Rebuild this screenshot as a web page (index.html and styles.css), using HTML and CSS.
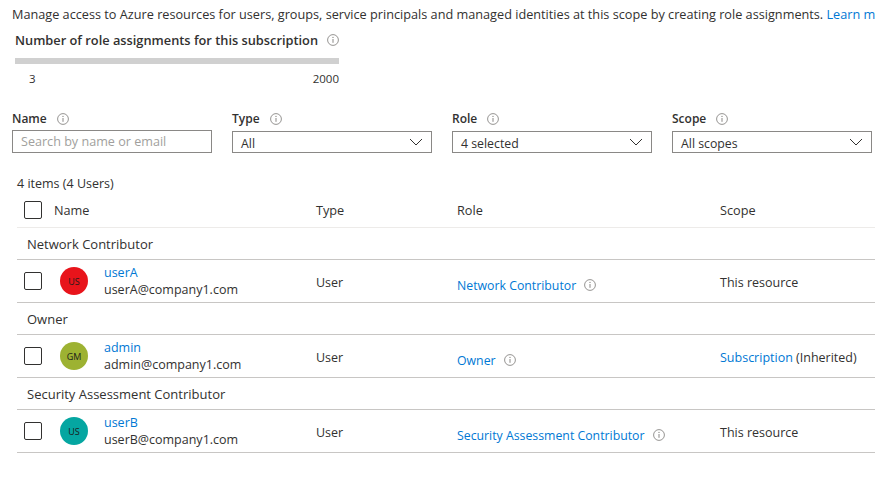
FILE: index.html
```html
<!DOCTYPE html>
<html lang="en">
<head>
<meta charset="utf-8">
<title>Role assignments</title>
<link rel="stylesheet" href="styles.css">
</head>
<body>
<div class="page">
  <p class="desc">Manage access to Azure resources for users, groups, service principals and managed identities at this scope by creating role assignments. <a class="link" href="#">Learn more</a></p>

  <div class="quota">
    <div class="quota-title">Number of role assignments for this subscription
      <svg class="info" width="12" height="12" viewBox="0 0 12 12"><circle cx="6" cy="6" r="5.4" fill="none" stroke="#8a8886" stroke-width="0.9"/><rect x="5.5" y="5" width="1" height="3.8" fill="#8a8886"/><circle cx="6" cy="3.4" r="0.65" fill="#8a8886"/></svg>
    </div>
    <div class="bar"></div>
    <div class="bar-labels"><span>3</span><span>2000</span></div>
  </div>

  <div class="filters">
    <div class="filter">
      <div class="flabel">Name <svg class="info" width="12" height="12" viewBox="0 0 12 12"><circle cx="6" cy="6" r="5.4" fill="none" stroke="#8a8886" stroke-width="0.9"/><rect x="5.5" y="5" width="1" height="3.8" fill="#8a8886"/><circle cx="6" cy="3.4" r="0.65" fill="#8a8886"/></svg></div>
      <div class="input"><span class="placeholder">Search by name or email</span></div>
    </div>
    <div class="filter">
      <div class="flabel">Type <svg class="info" width="12" height="12" viewBox="0 0 12 12"><circle cx="6" cy="6" r="5.4" fill="none" stroke="#8a8886" stroke-width="0.9"/><rect x="5.5" y="5" width="1" height="3.8" fill="#8a8886"/><circle cx="6" cy="3.4" r="0.65" fill="#8a8886"/></svg></div>
      <div class="select"><span>All</span><svg class="chev" width="14" height="8" viewBox="0 0 14 8"><path d="M1 1 L7 7 L13 1" fill="none" stroke="#323130" stroke-width="1"/></svg></div>
    </div>
    <div class="filter">
      <div class="flabel">Role <svg class="info" width="12" height="12" viewBox="0 0 12 12"><circle cx="6" cy="6" r="5.4" fill="none" stroke="#8a8886" stroke-width="0.9"/><rect x="5.5" y="5" width="1" height="3.8" fill="#8a8886"/><circle cx="6" cy="3.4" r="0.65" fill="#8a8886"/></svg></div>
      <div class="select"><span>4 selected</span><svg class="chev" width="14" height="8" viewBox="0 0 14 8"><path d="M1 1 L7 7 L13 1" fill="none" stroke="#323130" stroke-width="1"/></svg></div>
    </div>
    <div class="filter">
      <div class="flabel">Scope <svg class="info" width="12" height="12" viewBox="0 0 12 12"><circle cx="6" cy="6" r="5.4" fill="none" stroke="#8a8886" stroke-width="0.9"/><rect x="5.5" y="5" width="1" height="3.8" fill="#8a8886"/><circle cx="6" cy="3.4" r="0.65" fill="#8a8886"/></svg></div>
      <div class="select"><span>All scopes</span><svg class="chev" width="14" height="8" viewBox="0 0 14 8"><path d="M1 1 L7 7 L13 1" fill="none" stroke="#323130" stroke-width="1"/></svg></div>
    </div>
  </div>

  <div class="count">4 items (4 Users)</div>

  <div class="table">
    <div class="row head">
      <div class="c-check"><span class="checkbox"></span></div>
      <div>Name</div>
      <div>Type</div>
      <div>Role</div>
      <div>Scope</div>
    </div>

    <div class="group">Network Contributor</div>
    <div class="row data">
      <div class="c-check"><span class="checkbox"></span></div>
      <div class="c-name">
        <span class="avatar red">US</span>
        <div class="who"><a class="link" href="#">userA</a><span>userA@company1.com</span></div>
      </div>
      <div class="c-type">User</div>
      <div class="c-role"><a class="link" href="#">Network Contributor</a>
        <svg class="info" width="12" height="12" viewBox="0 0 12 12"><circle cx="6" cy="6" r="5.4" fill="none" stroke="#8a8886" stroke-width="0.9"/><rect x="5.5" y="5" width="1" height="3.8" fill="#8a8886"/><circle cx="6" cy="3.4" r="0.65" fill="#8a8886"/></svg></div>
      <div class="c-scope">This resource</div>
    </div>

    <div class="group">Owner</div>
    <div class="row data">
      <div class="c-check"><span class="checkbox"></span></div>
      <div class="c-name">
        <span class="avatar olive">GM</span>
        <div class="who"><a class="link" href="#">admin</a><span>admin@company1.com</span></div>
      </div>
      <div class="c-type">User</div>
      <div class="c-role"><a class="link" href="#">Owner</a>
        <svg class="info" width="12" height="12" viewBox="0 0 12 12"><circle cx="6" cy="6" r="5.4" fill="none" stroke="#8a8886" stroke-width="0.9"/><rect x="5.5" y="5" width="1" height="3.8" fill="#8a8886"/><circle cx="6" cy="3.4" r="0.65" fill="#8a8886"/></svg></div>
      <div class="c-scope"><a class="link" href="#">Subscription</a>&nbsp;(Inherited)</div>
    </div>

    <div class="group">Security Assessment Contributor</div>
    <div class="row data">
      <div class="c-check"><span class="checkbox"></span></div>
      <div class="c-name">
        <span class="avatar teal">US</span>
        <div class="who"><a class="link" href="#">userB</a><span>userB@company1.com</span></div>
      </div>
      <div class="c-type">User</div>
      <div class="c-role"><a class="link" href="#">Security Assessment Contributor</a>
        <svg class="info" width="12" height="12" viewBox="0 0 12 12"><circle cx="6" cy="6" r="5.4" fill="none" stroke="#8a8886" stroke-width="0.9"/><rect x="5.5" y="5" width="1" height="3.8" fill="#8a8886"/><circle cx="6" cy="3.4" r="0.65" fill="#8a8886"/></svg></div>
      <div class="c-scope">This resource</div>
    </div>
  </div>
</div>
</body>
</html>
```
FILE: styles.css
```css
* { box-sizing: border-box; }
html, body {
  margin: 0;
  background: #ffffff;
}
body {
  font-family: "Segoe UI", "Open Sans", sans-serif;
  font-size: 12px;
  color: #323130;
  overflow: hidden;
  width: 875px;
  height: 478px;
}
.page {
  padding-top: 5px;
}
.link {
  color: #0078d4;
  text-decoration: none;
}
.desc {
  margin: 0 0 0 12px;
  line-height: 18px;
  font-size: 12.7px;
  white-space: nowrap;
  overflow: hidden;
}
.info { display: inline-block; vertical-align: middle; margin-left: 6px; flex: none; }

.quota {
  margin-left: 15px;
  padding-top: 8px;
}
.quota-title {
  font-weight: 600;
  font-size: 12.8px;
  line-height: 18px;
  display: flex;
  align-items: center;
  white-space: nowrap;
}
.quota-title .info { margin-left: 9px; }
.bar {
  width: 324px;
  height: 6px;
  background: #d0d0d0;
  margin-top: 9px;
}
.bar-labels {
  width: 324px;
  display: flex;
  justify-content: space-between;
  margin-top: 7px;
  padding-left: 14px;
  line-height: 16px;
  font-size: 11.5px;
}

.filters {
  display: grid;
  grid-template-columns: repeat(4, 200px);
  column-gap: 20px;
  margin: 23px 0 0 12px;
}
.flabel {
  font-weight: 600;
  line-height: 18px;
  display: flex;
  align-items: center;
  margin-bottom: 3px;
}
.flabel .info { margin-left: 10px; }
.input, .select {
  height: 22px;
  border: 1px solid #8a8886;
  display: flex;
  align-items: center;
  padding: 0 8px;
}
.input { margin-top: -1px; height: 23px; }
.placeholder { color: #a19f9d; font-size: 12.6px; }
.select {
  justify-content: space-between;
  padding-top: 2px;
  font-size: 12.3px;
}
.select .chev { margin-top: -2px; }

.count {
  margin: 22px 0 0 17px;
  line-height: 18px;
  font-size: 12.5px;
}

.table {
  margin-left: 17px;
}
.row {
  display: grid;
  grid-template-columns: 37px 262px 141px 263px 1fr;
  align-items: center;
}
.head {
  height: 35px;
  border-bottom: 1px solid #edebe9;
  font-size: 12.7px;
}
.c-check { padding-left: 7px; display: flex; }
.checkbox {
  width: 18px;
  height: 18px;
  border: 1px solid #323130;
  border-radius: 2px;
  display: block;
}
.group {
  height: 32px;
  border-bottom: 1px solid #c8c6c4;
  padding-left: 10px;
  display: flex;
  align-items: center;
  font-size: 13px;
}
.data {
  height: 43px;
  border-bottom: 1px solid #c8c6c4;
  font-size: 12.5px;
}
.c-name {
  display: flex;
  align-items: center;
}
.avatar {
  width: 28px;
  height: 28px;
  border-radius: 50%;
  margin-left: 6px;
  margin-right: 16px;
  display: flex;
  align-items: center;
  justify-content: center;
  font-size: 9px;
  color: #1b1a19;
}
.red { background: #e8141b; }
.olive { background: #9db232; }
.teal { background: #05a6a1; }
.who {
  display: flex;
  flex-direction: column;
  line-height: 17px;
}
.c-type, .c-scope { padding-top: 2px; }
.c-role { padding-top: 8px; display: flex; align-items: center; }
.c-role .info { margin-left: 8px; }
.c-role .link { font-size: 12.3px; }
```
